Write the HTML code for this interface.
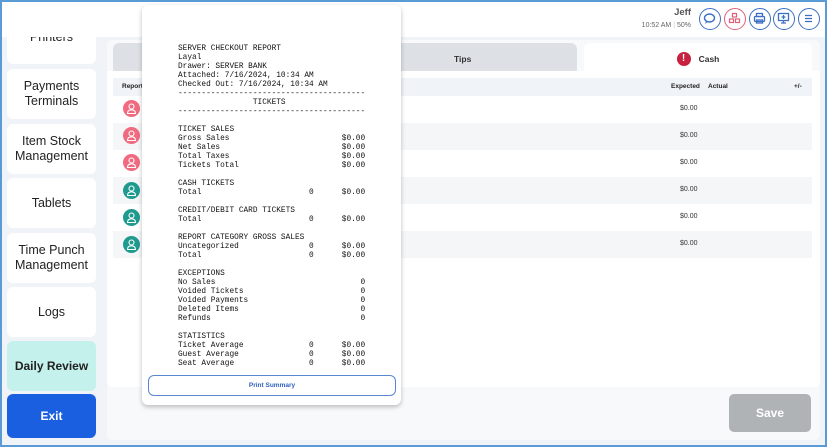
<!DOCTYPE html>
<html><head><meta charset="utf-8"><style>
*{box-sizing:border-box;margin:0;padding:0}
body{width:827px;height:447px;overflow:hidden;background:#f0f3f8;font-family:"Liberation Sans",sans-serif;position:relative}
.frame{position:absolute;inset:0;border:2px solid #5b9bd5;pointer-events:none;z-index:50}
.top{position:absolute;left:0;top:0;width:827px;height:37px;background:#fff;z-index:5}
.side{position:absolute;left:7px;width:89px;background:#fff;border-radius:6px;display:flex;align-items:center;justify-content:center;text-align:center;font-size:12.5px;color:#222;line-height:15px}
.panel{position:absolute;background:#fff;border-radius:6px}
.ic{position:absolute;top:8px;width:22px;height:22px;border:1.5px solid #3a6fc4;border-radius:50%}
.row{position:absolute;left:113px;width:699px;height:27px}
.av{position:absolute;left:123px;width:17px;height:17px;border-radius:50%}
.amt{position:absolute;left:680px;font-size:7px;color:#333}
pre{font-family:"Liberation Mono",monospace;font-size:7.8px;line-height:9px;color:#111}
</style></head><body>
<div class="frame"></div>
<div class="top">
<div style="position:absolute;right:136px;top:7px;font-size:9.5px;font-weight:bold;color:#555">Jeff</div>
<div style="position:absolute;right:136px;top:22px;font-size:7px;color:#666">10:52 AM <span style="color:#ccc">|</span> 50%</div>
<div class="ic" style="left:699px"><svg width="19" height="19" viewBox="0 0 19 19"><ellipse cx="9.5" cy="9" rx="5" ry="4" fill="none" stroke="#3a6fc4" stroke-width="1.4"/><path d="M6 12 L5 15 L8 12.5" fill="#3a6fc4"/></svg></div>
<div class="ic" style="left:724px;border-color:#e0607a"><svg width="19" height="19" viewBox="0 0 19 19" fill="none" stroke="#e0607a" stroke-width="1.2"><rect x="7.5" y="4.5" width="4" height="3.5"/><rect x="4.5" y="10" width="4" height="3.5"/><rect x="10.5" y="10" width="4" height="3.5"/></svg></div>
<div class="ic" style="left:749px"><svg width="19" height="19" viewBox="0 0 19 19" fill="none" stroke="#3a6fc4" stroke-width="1.3"><rect x="6.5" y="4.5" width="6" height="3"/><rect x="4.5" y="7.5" width="10" height="5" rx="1"/><rect x="6.5" y="11" width="6" height="3"/></svg></div>
<div class="ic" style="left:773px"><svg width="19" height="19" viewBox="0 0 19 19" fill="none" stroke="#3a6fc4" stroke-width="1.3"><rect x="4.5" y="4.5" width="10" height="7"/><path d="M9.5 6v4M7.5 8h4M9.5 11.5v2M7 14h5"/></svg></div>
<div class="ic" style="left:798px"><svg width="19" height="19" viewBox="0 0 19 19" stroke="#3a6fc4" stroke-width="1.2"><path d="M6 6.5h7M6 9.5h7M6 12.5h7"/></svg></div>
</div>
<div class="side" style="top:20px;height:44px;align-items:flex-end;padding-bottom:19px">Printers</div>
<div class="side" style="top:69px;height:50px">Payments<br>Terminals</div>
<div class="side" style="top:124px;height:50px">Item Stock<br>Management</div>
<div class="side" style="top:178px;height:50px">Tablets</div>
<div class="side" style="top:233px;height:50px">Time Punch<br>Management</div>
<div class="side" style="top:287px;height:50px">Logs</div>
<div class="side" style="top:341px;height:50px;background:#c4f1ec;font-weight:bold;font-size:12px">Daily Review</div>
<div class="side" style="top:394px;height:44px;background:#1a5fe0;color:#fff;font-weight:bold;font-size:12px">Exit</div>

<div class="panel" style="left:107px;top:40px;width:713px;height:400px;background:#f8f9fb"></div>
<div class="panel" style="left:113px;top:43px;width:464px;height:32px;background:#dde1e6;font-size:8.5px;font-weight:bold;color:#333"><span style="position:absolute;left:341px;top:11px">Tips</span></div>
<div class="panel" style="left:584px;top:43px;width:228px;height:32px;font-size:8.5px;font-weight:bold;color:#333;display:flex;align-items:center;justify-content:center"><span style="display:inline-block;width:14px;height:14px;border-radius:50%;background:#c8203f;color:#fff;text-align:center;line-height:14px;font-size:10px;margin-right:8px">!</span>Cash</div>
<div class="panel" style="left:107px;top:71px;width:713px;height:316px;border-radius:0 0 6px 6px"></div>
<div class="row" style="top:78px;height:18px;background:#f0f3f8;font-size:6.5px;font-weight:bold;color:#222"><span style="position:absolute;left:9px;top:5px">Report</span><span style="position:absolute;left:558px;top:5px">Expected</span><span style="position:absolute;left:595px;top:5px">Actual</span><span style="position:absolute;left:681px;top:5px">+/-</span></div>
<div class="row" style="top:123px;background:#f5f6f8"></div>
<div class="row" style="top:177px;background:#f5f6f8"></div>
<div class="row" style="top:231px;background:#f5f6f8"></div>
<svg width="0" height="0" style="position:absolute"><defs><g id="p" fill="none" stroke="#fff" stroke-width="1.1"><circle cx="8.5" cy="6.5" r="2.5"/><path d="M4.5 13.5 Q4.5 9.8 8.5 9.8 Q12.5 9.8 12.5 13.5 Z"/></g></defs></svg>
<div class="av" style="top:100px;background:#f06b80"><svg width="17" height="17"><use href="#p"/></svg></div>
<div class="av" style="top:127px;background:#f06b80"><svg width="17" height="17"><use href="#p"/></svg></div>
<div class="av" style="top:154px;background:#f06b80"><svg width="17" height="17"><use href="#p"/></svg></div>
<div class="av" style="top:182px;background:#1e9a8e"><svg width="17" height="17"><use href="#p"/></svg></div>
<div class="av" style="top:209px;background:#1e9a8e"><svg width="17" height="17"><use href="#p"/></svg></div>
<div class="av" style="top:236px;background:#1e9a8e"><svg width="17" height="17"><use href="#p"/></svg></div>
<div class="amt" style="top:105px">$0.00</div>
<div class="amt" style="top:132px">$0.00</div>
<div class="amt" style="top:159px">$0.00</div>
<div class="amt" style="top:186px">$0.00</div>
<div class="amt" style="top:213px">$0.00</div>
<div class="amt" style="top:240px">$0.00</div>
<div style="position:absolute;left:729px;top:394px;width:82px;height:38px;border-radius:5px;background:#b0b3b5;color:#fff;font-weight:bold;font-size:12px;display:flex;align-items:center;justify-content:center">Save</div>

<div style="position:absolute;left:142px;top:5px;width:259px;height:400px;background:#fff;border-radius:6px;box-shadow:0 2px 5px rgba(0,0,0,.25);z-index:10">
<pre style="position:absolute;left:36px;top:40px">SERVER CHECKOUT REPORT
Layal
Drawer: SERVER BANK
Attached: 7/16/2024, 10:34 AM
Checked Out: 7/16/2024, 10:34 AM
----------------------------------------
                TICKETS
----------------------------------------

TICKET SALES
Gross Sales                        $0.00
Net Sales                          $0.00
Total Taxes                        $0.00
Tickets Total                      $0.00

CASH TICKETS
Total                       0      $0.00

CREDIT/DEBIT CARD TICKETS
Total                       0      $0.00

REPORT CATEGORY GROSS SALES
Uncategorized               0      $0.00
Total                       0      $0.00

EXCEPTIONS
No Sales                               0
Voided Tickets                         0
Voided Payments                        0
Deleted Items                          0
Refunds                                0

STATISTICS
Ticket Average              0      $0.00
Guest Average               0      $0.00
Seat Average                0      $0.00</pre>
<div style="position:absolute;left:6px;top:370px;width:248px;height:21px;border:1.2px solid #5b86d0;border-radius:6px;font-size:6.5px;font-weight:bold;color:#2f60c0;display:flex;align-items:center;justify-content:center">Print Summary</div>
</div>
</body></html>
